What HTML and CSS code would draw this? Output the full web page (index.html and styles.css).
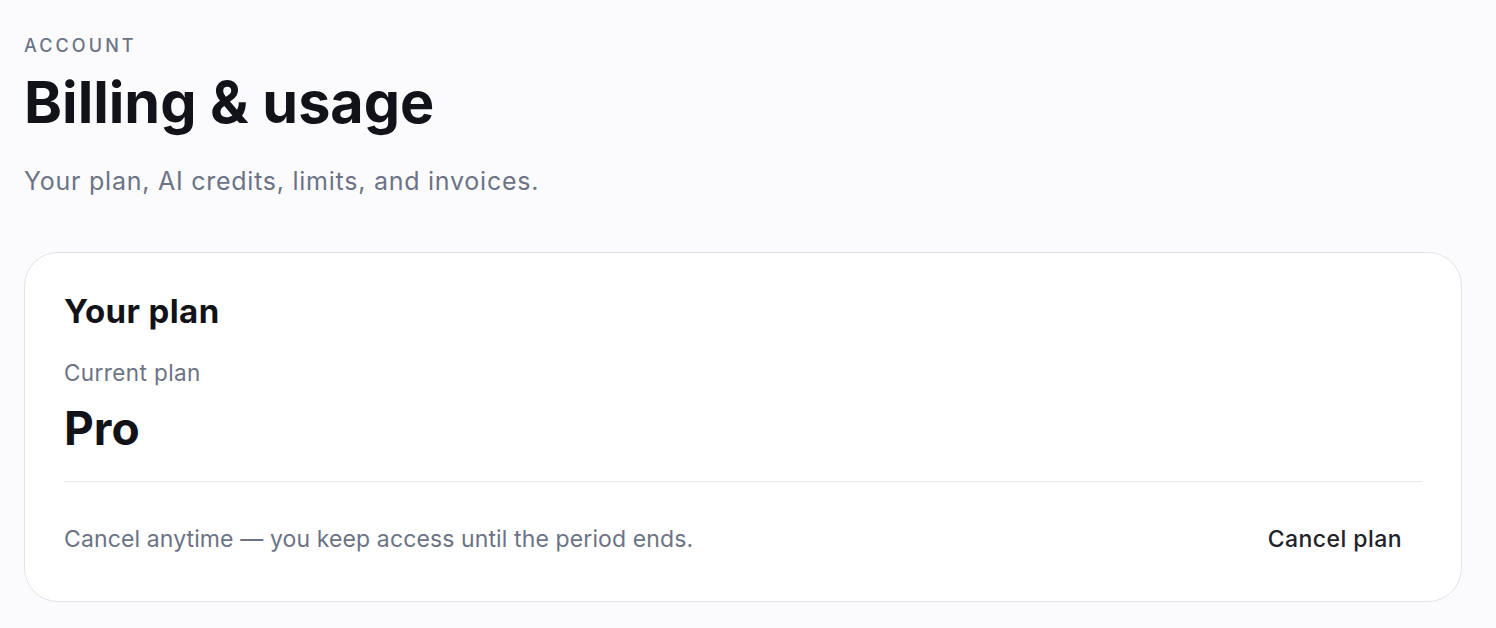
FILE: index.html
```html
<!DOCTYPE html>
<html lang="en">
<head>
<meta charset="utf-8">
<title>Billing & usage</title>
<link rel="stylesheet" href="styles.css">
</head>
<body>
<main class="page">
  <header class="page-header">
    <div class="eyebrow">ACCOUNT</div>
    <h1 class="title">Billing &amp; usage</h1>
    <p class="subtitle">Your plan, AI credits, limits, and invoices.</p>
  </header>
  <section class="card">
    <h2 class="card-title">Your plan</h2>
    <div class="plan-label">Current plan</div>
    <div class="plan-name">Pro</div>
    <div class="card-footer">
      <p class="footer-note">Cancel anytime — you keep access until the period ends.</p>
      <button class="btn-cancel" type="button">Cancel plan</button>
    </div>
  </section>
</main>
</body>
</html>
```
FILE: styles.css
```css
* { box-sizing: border-box; }
html, body { margin: 0; padding: 0; }
body {
  background: #fbfbfe;
  font-family: "Inter", "Noto Sans", sans-serif;
  color: #121419;
}
.page {
  padding: 35px 34px 26px 24px;
}
.eyebrow {
  font-size: 18px;
  line-height: 22px;
  letter-spacing: 3.1px;
  color: #6b7385;
  font-weight: 500;
}
.title {
  margin: 13px 0 0;
  font-size: 57.5px;
  line-height: 64px;
  font-weight: 700;
  letter-spacing: 0;
  color: #111318;
}
.subtitle {
  margin: 31px 0 0;
  font-size: 25px;
  line-height: 32px;
  letter-spacing: 0.75px;
  color: #6b7385;
}
.card {
  margin-top: 55px;
  background: #ffffff;
  border: 1px solid #e2e3ea;
  border-radius: 34px;
  padding: 38px 39px 39px 39px;
}
.card-title {
  margin: 0;
  font-size: 33px;
  line-height: 40px;
  font-weight: 650;
  letter-spacing: 0.4px;
  color: #111318;
}
.plan-label {
  margin-top: 27px;
  font-size: 22.5px;
  line-height: 30px;
  letter-spacing: 0.4px;
  color: #6b7385;
}
.plan-name {
  margin-top: 12px;
  font-size: 46px;
  line-height: 56px;
  font-weight: 700;
  color: #111318;
}
.card-footer {
  margin-top: 25px;
  border-top: 1px solid #e8e9ee;
  padding-top: 34px;
  display: flex;
  align-items: center;
  justify-content: space-between;
}
.footer-note {
  margin: 0;
  font-size: 23px;
  line-height: 30px;
  letter-spacing: 0.12px;
  color: #6b7385;
}
.btn-cancel {
  font-family: inherit;
  background: transparent;
  border: 0;
  padding: 8px 20px;
  font-size: 23px;
  line-height: 30px;
  font-weight: 520;
  letter-spacing: 0.45px;
  color: #1f2229;
  cursor: pointer;
}
```
